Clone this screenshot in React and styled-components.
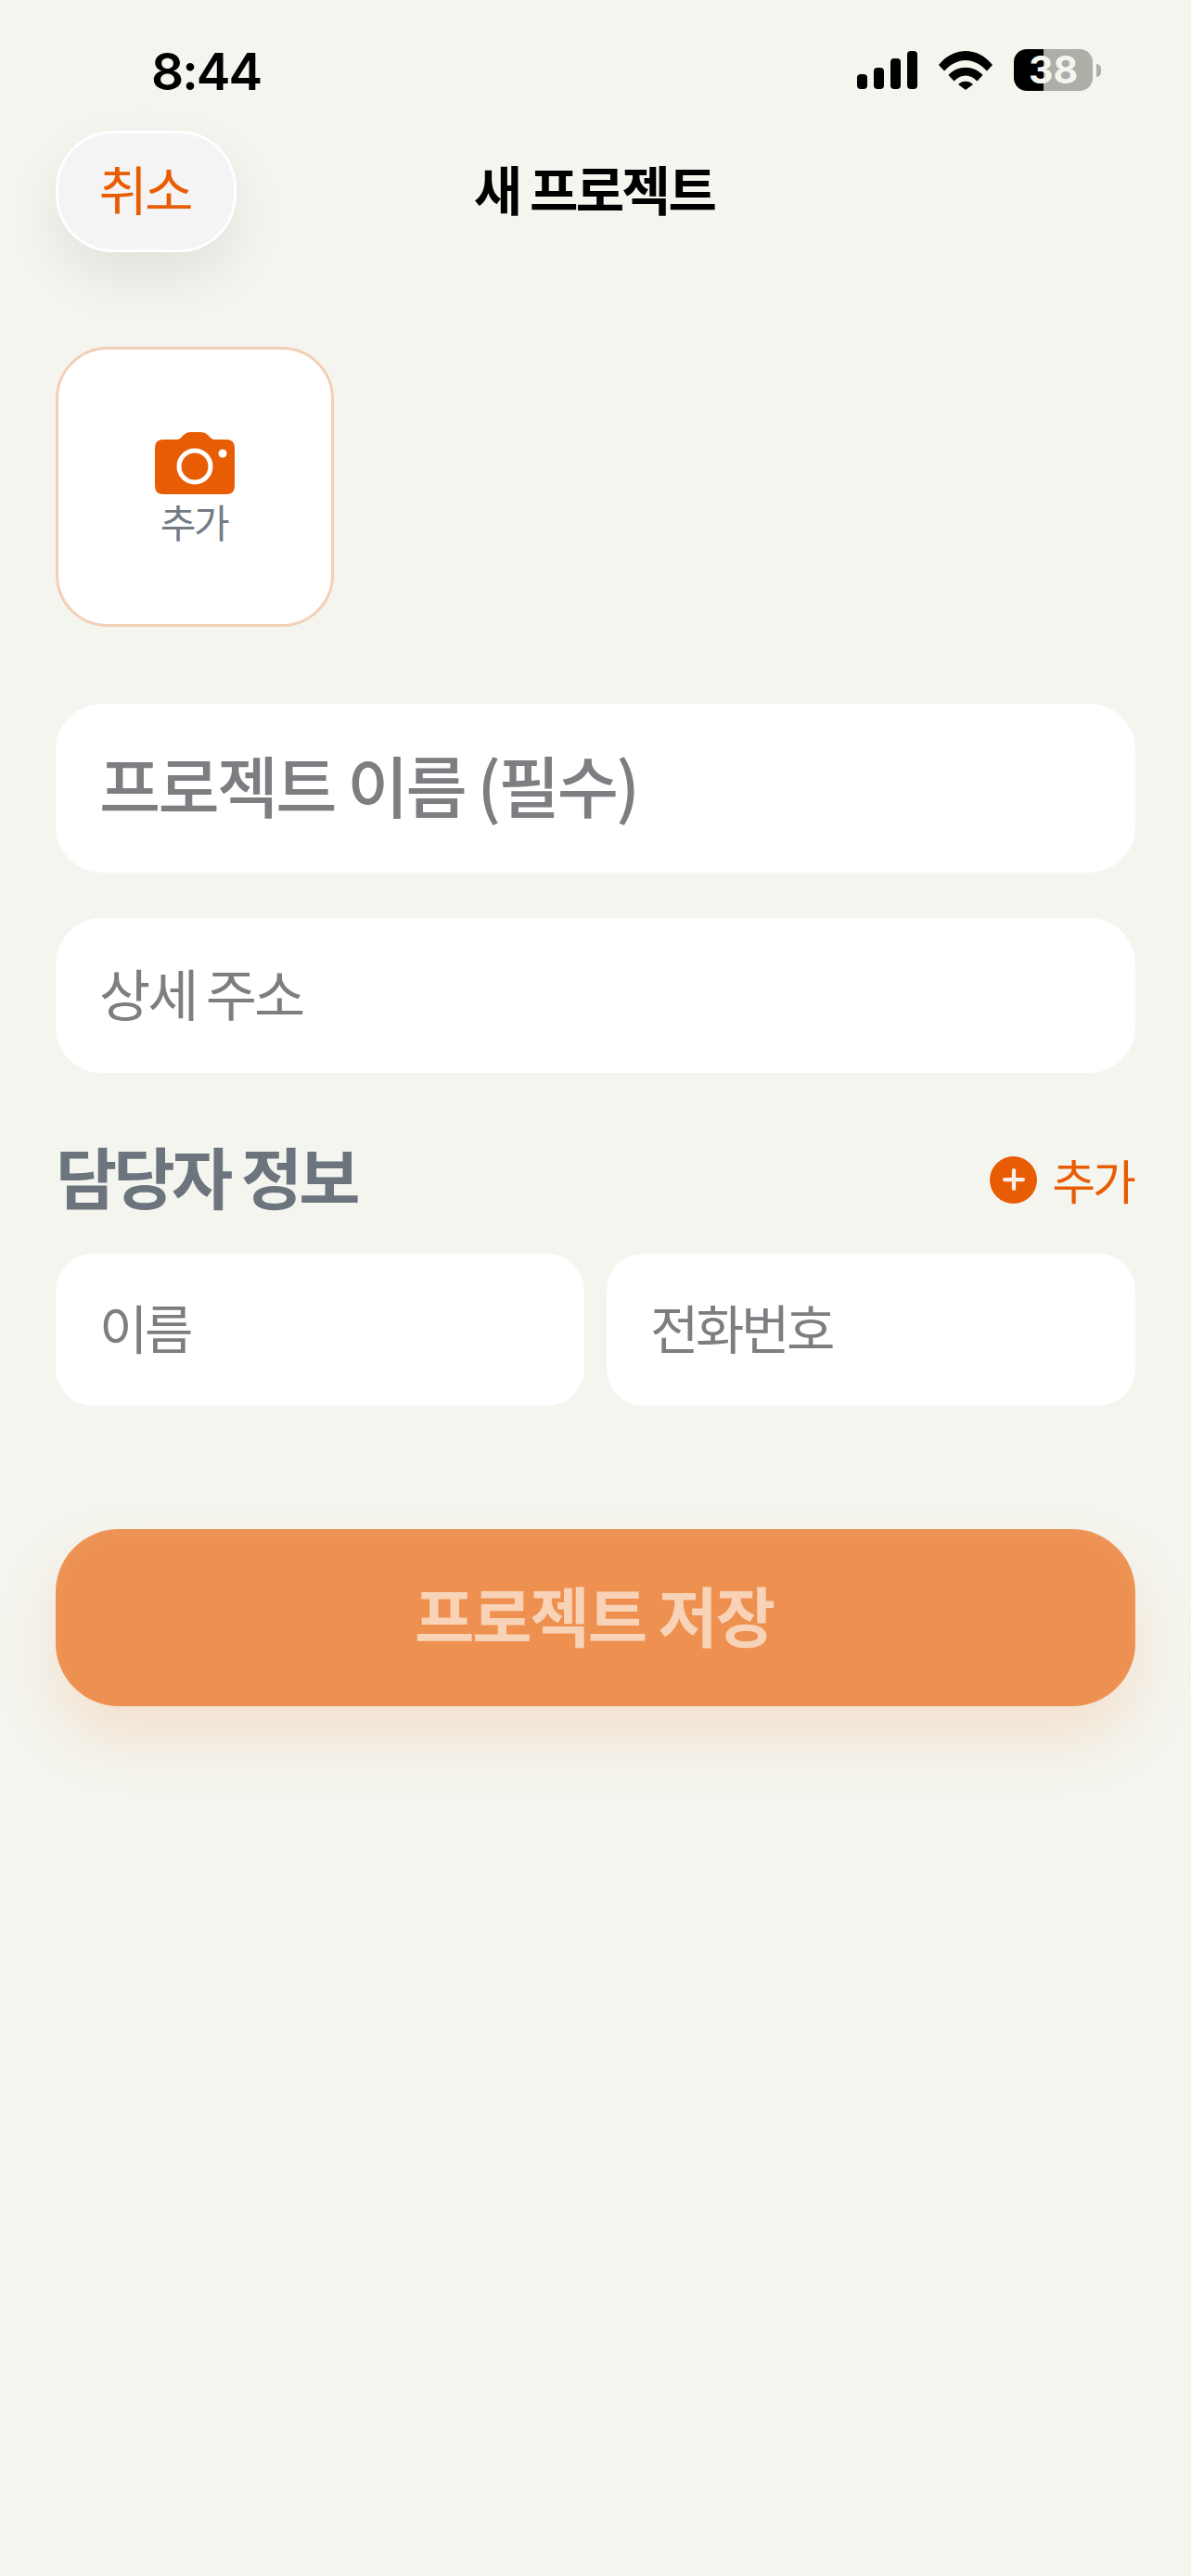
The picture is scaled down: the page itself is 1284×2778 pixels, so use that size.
import styled, {createGlobalStyle} from 'styled-components';
import {Plus} from 'lucide-react';

const GlobalStyle = createGlobalStyle`
  html, body {
    margin: 0;
    padding: 0;
    background: #f4f5ef;
  }
  * {
    box-sizing: border-box;
  }
`;

const KR = `"Noto Sans CJK KR", "Noto Sans", sans-serif`;

const Page = styled.div`
  width: 1284px;
  height: 2778px;
  background: #f4f5ef;
  font-family: ${KR};
  overflow: hidden;
`;

const StatusBar = styled.div`
  height: 141px;
  padding: 43px 97px 0 163px;
  display: flex;
  justify-content: space-between;
  align-items: flex-start;
`;

const Clock = styled.div`
  font-family: Inter, sans-serif;
  font-size: 55px;
  line-height: 68px;
  font-weight: 600;
  letter-spacing: -2px;
  color: #000;
`;

const StatusIcons = styled.div`
  display: flex;
  align-items: center;
  gap: 23px;
  padding-top: 10px;
`;

const Battery = styled.div`
  width: 85px;
  height: 45px;
  border-radius: 14px;
  background: linear-gradient(to right, #000 32px, #adaea8 32px);
  display: flex;
  align-items: center;
  justify-content: center;
  font-family: Inter, sans-serif;
  font-size: 41px;
  line-height: 45px;
  font-weight: 700;
  color: #f4f5ef;
`;

const BatteryWrap = styled.div`
  display: flex;
  align-items: center;
  gap: 4px;
`;

const BatteryNub = styled.div`
  width: 5px;
  height: 14px;
  border-radius: 0 7px 7px 0;
  background: #adaea8;
`;

const Header = styled.div`
  padding: 0 60px;
  display: grid;
  grid-template-columns: 1fr auto 1fr;
  align-items: center;
`;

const CancelButton = styled.div`
  width: 195px;
  height: 131px;
  padding: 0 3px 9px 0;
  border-radius: 62px;
  background: #f4f4f5;
  border: 3px solid #fff;
  box-shadow: 0 26px 60px rgba(0, 0, 0, 0.08);
  display: flex;
  align-items: center;
  justify-content: center;
  font-size: 57px;
  letter-spacing: -3px;
  color: #e85d04;
`;

const Title = styled.div`
  padding: 0 3px 9px 0;
  font-size: 57px;
  font-weight: 600;
  letter-spacing: -2.6px;
  color: #000;
`;

const Content = styled.div`
  padding: 102px 60px 0;
  display: flex;
  flex-direction: column;
`;

const PhotoCard = styled.div`
  width: 300px;
  height: 302px;
  border-radius: 56px;
  background: #fff;
  border: 3px solid #f3cfb6;
  display: flex;
  flex-direction: column;
  align-items: center;
  justify-content: center;
  gap: 6px;
  margin-bottom: 83px;
`;

const PhotoLabel = styled.div`
  padding-right: 2px;
  font-size: 42px;
  line-height: 46px;
  letter-spacing: -2.4px;
  color: #727b84;
`;

const Field = styled.div`
  height: ${(p) => p.$height}px;
  border-radius: ${(p) => p.$radius}px;
  background: #fff;
  padding: 0 47px ${(p) => p.$lift}px;
  display: flex;
  align-items: center;
  font-size: ${(p) => p.$size}px;
  font-weight: ${(p) => p.$weight || 400};
  letter-spacing: ${(p) => p.$spacing}px;
  color: #7e7e82;
  white-space: nowrap;
`;

const AddressField = styled(Field)`
  margin-top: 49px;
`;

const SectionHeader = styled.div`
  height: 195px;
  padding-top: 24px;
  display: flex;
  align-items: center;
  justify-content: space-between;
`;

const SectionTitle = styled.div`
  font-size: 72px;
  font-weight: 600;
  letter-spacing: -3.8px;
  color: #6c757d;
`;

const AddButton = styled.div`
  display: flex;
  align-items: center;
  gap: 16px;
  padding: 11px 2px 0 0;
  font-size: 51px;
  letter-spacing: -3px;
  color: #e85d04;
`;

const PlusCircle = styled.div`
  width: 51px;
  height: 51px;
  border-radius: 50%;
  background: #e85d04;
  display: flex;
  align-items: center;
  justify-content: center;
  color: #f8efe8;
`;

const ContactRow = styled.div`
  display: grid;
  grid-template-columns: 1fr 1fr;
  gap: 24px;
`;

const SaveButton = styled.div`
  margin-top: 133px;
  height: 191px;
  padding: 0 3px 8px 0;
  border-radius: 68px;
  background: #ed9050;
  box-shadow: inset 0 8px 30px rgba(255, 255, 255, 0.06), 0 34px 64px rgba(238, 145, 82, 0.2);
  display: flex;
  align-items: center;
  justify-content: center;
  font-size: 70px;
  font-weight: 600;
  letter-spacing: -2.2px;
  color: #f8d3b8;
`;

function SignalIcon() {
  return (
    <svg width="65" height="41" viewBox="0 0 65 41" fill="#000">
      <rect x="0" y="25" width="11" height="16" rx="4" />
      <rect x="18" y="18" width="11" height="23" rx="4" />
      <rect x="36" y="8" width="11" height="33" rx="4" />
      <rect x="54" y="0" width="11" height="41" rx="4" />
    </svg>
  );
}

function WifiIcon() {
  return (
    <svg width="58" height="42" viewBox="0 0 58 42" fill="#000">
      <path d="M0 15 C16 -5 42 -5 58 15 L52 21.5 C38 6 20 6 6 21.5 Z" />
      <path d="M10.5 26 C20 15 38 15 47.5 26 L41.5 32.5 C34 24.5 24 24.5 16.5 32.5 Z" />
      <path d="M21 36 C25 31.5 33 31.5 37 36 L29 42 Z" />
    </svg>
  );
}

function CameraIcon() {
  return (
    <svg width="86" height="67" viewBox="0 0 86 67">
      <path
        fill="#e85d04"
        d="M9 8 H24 Q26 8 28 6 L31 3 Q34 0 38 0 H50 Q54 0 57 3 L60 6 Q62 8 64 8 H77 Q86 8 86 17 V58 Q86 67 77 67 H9 Q0 67 0 58 V17 Q0 8 9 8 Z"
      />
      <circle cx="43" cy="37" r="17" fill="none" stroke="#fff" strokeWidth="5" />
      <circle cx="73" cy="23" r="4.5" fill="#fff" />
    </svg>
  );
}

export default function App() {
  return (
    <>
      <GlobalStyle />
      <Page>
        <StatusBar>
          <Clock>8:44</Clock>
          <StatusIcons>
            <SignalIcon />
            <WifiIcon />
            <BatteryWrap>
              <Battery>38</Battery>
              <BatteryNub />
            </BatteryWrap>
          </StatusIcons>
        </StatusBar>
        <Header>
          <CancelButton>취소</CancelButton>
          <Title>새 프로젝트</Title>
        </Header>
        <Content>
          <PhotoCard>
            <CameraIcon />
            <PhotoLabel>추가</PhotoLabel>
          </PhotoCard>
          <Field $height={182} $radius={50} $size={72} $weight={500} $spacing={-2.8} $lift={12}>프로젝트 이름 (필수)</Field>
          <AddressField $height={167} $radius={50} $size={60} $spacing={-3} $lift={9}>상세 주소</AddressField>
          <SectionHeader>
            <SectionTitle>담당자 정보</SectionTitle>
            <AddButton>
              <PlusCircle><Plus size={34} strokeWidth={3} /></PlusCircle>
              추가
            </AddButton>
          </SectionHeader>
          <ContactRow>
            <Field $height={164} $radius={40} $size={57} $spacing={-3.4} $lift={9}>이름</Field>
            <Field $height={164} $radius={40} $size={57} $spacing={-3.4} $lift={9}>전화번호</Field>
          </ContactRow>
          <SaveButton>프로젝트 저장</SaveButton>
        </Content>
      </Page>
    </>
  );
}
